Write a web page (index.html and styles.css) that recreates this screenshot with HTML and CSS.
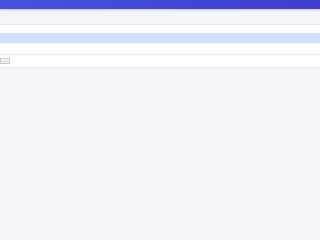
FILE: index.html
```html
<!DOCTYPE html>
<html lang="en">
<head>
<meta charset="utf-8">
<title>Page</title>
<link rel="stylesheet" href="styles.css">
</head>
<body>
<header class="topbar"></header>
<div class="toolbar"></div>
<main class="content">
  <div class="panel">
    <div class="gap"></div>
    <div class="selected-row"></div>
    <div class="row-a"><span class="tiny">·</span></div>
  </div>
  <div class="actions">
    <button class="btn">Label</button>
  </div>
</main>
</body>
</html>
```
FILE: styles.css
```css
html, body {
  margin: 0;
  padding: 0;
}
body {
  background: #f4f5f9;
  font-family: "Liberation Sans", Arial, sans-serif;
  min-height: 100vh;
  overflow: hidden;
}
.topbar {
  height: 9px;
  background: linear-gradient(90deg, #4552e1 0%, #3d3ecc 100%);
  box-shadow: 0 1px 2px rgba(40, 40, 120, 0.25);
  position: relative;
}
.toolbar {
  height: 14px;
  margin-top: 1px;
  background: #f3f4f8;
  border-bottom: 1px solid #e7e8ee;
}
.content {
  display: flex;
  flex-direction: column;
}
.panel {
  background: #ffffff;
  display: flex;
  flex-direction: column;
}
.gap {
  height: 8px;
}
.selected-row {
  height: 10px;
  background: #cfe0fc;
}
.row-a {
  height: 10px;
  border-top: 1px solid #f1f2f5;
  border-bottom: 1px solid #eaebef;
  display: flex;
  align-items: center;
}
.tiny {
  font-size: 3px;
  color: #c8c8cc;
  line-height: 3px;
  padding-top: 4px;
}
.actions {
  background: #ffffff;
  height: 12px;
  border-bottom: 1px solid #e8e9ee;
  display: flex;
  align-items: center;
}
.btn {
  font-family: "Liberation Sans", Arial, sans-serif;
  font-size: 2.5px;
  color: #9a9aa0;
  height: 6px;
  width: 10px;
  padding: 0;
  margin: 0;
  border: 1px solid #c9c9cc;
  background: #f6f6f7;
  border-radius: 0;
  line-height: 3px;
}
```
